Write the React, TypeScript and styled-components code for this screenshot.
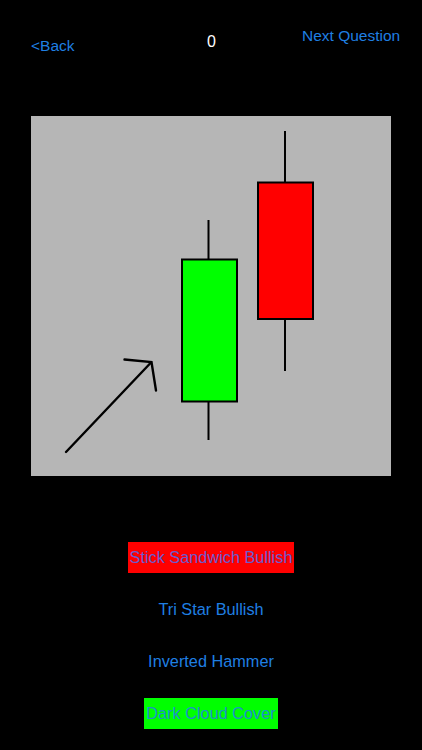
import styled, { createGlobalStyle } from "styled-components";

const GlobalStyle = createGlobalStyle`
  html, body {
    margin: 0;
    padding: 0;
    background: #000;
  }
  body {
    font-family: "Liberation Sans", Arial, sans-serif;
  }
`;

type Answer = {
  label: string;
  bg?: string;
  color: string;
};

const answers: Answer[] = [
  { label: "Stick Sandwich Bullish", bg: "#ff0000", color: "#6a5ccf" },
  { label: "Tri Star Bullish", color: "#1f7fe3" },
  { label: "Inverted Hammer", color: "#1f7fe3" },
  { label: "Dark Cloud Cover", bg: "#00ff00", color: "#1e8fca" },
];

export default function App() {
  return (
    <>
      <GlobalStyle />
      <Screen>
        {/* верхняя панель */}
        <Header>
          <BackLink>&lt;Back</BackLink>
          <Score>0</Score>
          <NextLink>Next Question</NextLink>
        </Header>

        {/* график со свечами */}
        <Chart>
          <svg width="360" height="360" viewBox="0 0 360 360">
            <g stroke="#000" strokeWidth="2" fill="none">
              <line x1="177.5" y1="104" x2="177.5" y2="324" />
              <line x1="254" y1="15" x2="254" y2="255" />
            </g>
            <rect x="151" y="143.5" width="55" height="142" fill="#00ff00" stroke="#000" strokeWidth="2" />
            <rect x="227" y="66.5" width="55" height="136.5" fill="#ff0000" stroke="#000" strokeWidth="2" />
            <g stroke="#000" strokeWidth="2.4" fill="none" strokeLinecap="round">
              <line x1="35" y1="336" x2="120" y2="246.5" />
              <polyline points="93.5,243.5 120.5,246 125,274.5" strokeLinejoin="miter" />
            </g>
          </svg>
        </Chart>

        {/* варианты ответов */}
        <Answers>
          {answers.map((a) => (
            <AnswerButton key={a.label} $bg={a.bg} $color={a.color}>
              {a.label}
            </AnswerButton>
          ))}
        </Answers>
      </Screen>
    </>
  );
}

const Screen = styled.div`
  width: 422px;
  height: 750px;
  background: #000;
  display: flex;
  flex-direction: column;
  overflow: hidden;
`;

const Header = styled.div`
  height: 116px;
  display: flex;
  align-items: flex-start;
  justify-content: space-between;
  padding: 0 22px 0 31px;
  box-sizing: border-box;
  font-size: 15.5px;
  line-height: 18px;
`;

const BackLink = styled.a`
  color: #1f7fe3;
  margin-top: 37px;
  width: 80px;
`;

const Score = styled.span`
  color: #fff;
  font-size: 16px;
  margin-top: 33px;
  margin-left: 10px;
`;

const NextLink = styled.a`
  color: #1f7fe3;
  margin-top: 27px;
  width: 98px;
  white-space: nowrap;
`;

const Chart = styled.div`
  width: 360px;
  height: 360px;
  margin-left: 31px;
  background: #b6b6b6;

  svg {
    display: block;
  }
`;

const Answers = styled.div`
  display: flex;
  flex-direction: column;
  align-items: center;
  gap: 21px;
  margin-top: 66px;
`;

const AnswerButton = styled.div<{ $bg?: string; $color: string }>`
  height: 31px;
  line-height: 31px;
  padding: 0 2px;
  font-size: 16.3px;
  background: ${(p) => p.$bg ?? "transparent"};
  color: ${(p) => p.$color};
  white-space: nowrap;
`;
